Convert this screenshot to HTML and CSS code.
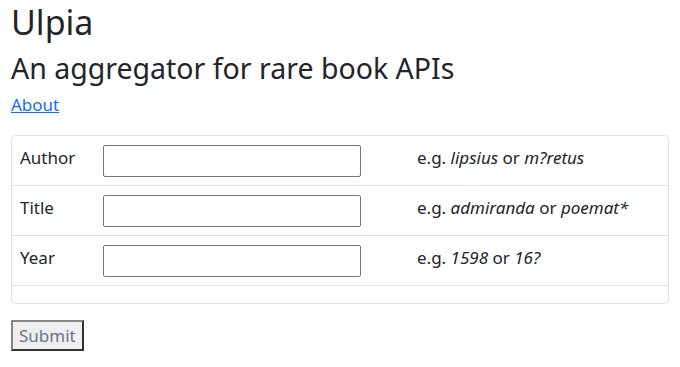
FILE: index.html
```html
<!DOCTYPE html>
<html>
<head>
<meta charset="utf-8">
<link rel="stylesheet" href="styles.css">
</head>
<body>
<div class="page">
  <h1 class="title">Ulpia</h1>
  <h2 class="subtitle">An aggregator for rare book APIs</h2>
  <p class="nav"><a href="#">About</a></p>
  <form class="search">
    <div class="grid">
      <div class="row">
        <div class="cell label">Author</div>
        <div class="cell"><input class="field" type="text"></div>
        <div class="cell hint">e.g. <i>lipsius</i> or <i>m?retus</i></div>
      </div>
      <div class="row">
        <div class="cell label">Title</div>
        <div class="cell"><input class="field" type="text"></div>
        <div class="cell hint">e.g. <i>admiranda</i> or <i>poemat*</i></div>
      </div>
      <div class="row">
        <div class="cell label">Year</div>
        <div class="cell"><input class="field" type="text"></div>
        <div class="cell hint">e.g. <i>1598</i> or <i>16?</i></div>
      </div>
      <div class="row empty"></div>
    </div>
    <button class="submit" type="submit">Submit</button>
  </form>
</div>
</body>
</html>
```
FILE: styles.css
```css
html, body {
  margin: 0;
  padding: 0;
  background: #fff;
}
body {
  font-family: "Noto Sans", "Open Sans", sans-serif;
  font-size: 17px;
  line-height: 25px;
  color: #212529;
}
.page {
  padding: 0 11px;
}
.title {
  margin: 0;
  font-size: 34px;
  font-weight: 400;
  line-height: 44px;
}
.subtitle {
  margin: 4px 0 0;
  font-size: 28.5px;
  font-weight: 400;
  line-height: 40px;
}
.nav {
  margin: 4px 0 18px;
}
.nav a {
  color: #0d6efd;
  text-decoration: underline;
}
.grid {
  border: 1px solid #dee2e6;
  border-radius: 4px;
}
.row {
  display: grid;
  grid-template-columns: 83px 314px 1fr;
  border-bottom: 1px solid #dee2e6;
}
.row.empty {
  height: 17px;
  border-bottom: none;
}
.cell {
  padding: 8px;
}
.label {
  padding-top: 9px;
}
.hint {
  padding-top: 9px;
}
.field {
  box-sizing: border-box;
  display: block;
  width: 258px;
  height: 32px;
  margin: 1px 0 0;
  border: 1px solid #767676;
  border-radius: 2px;
  font: inherit;
}
.hint i {
  font-style: italic;
}
.submit {
  margin-top: 16px;
  font-family: inherit;
  font-size: 17px;
  line-height: 25px;
  padding: 1px 6px;
  color: #6c757d;
  background: #efefef;
  border: 2px solid #333;
  border-color: #858585 #333 #333 #858585;
}
```
